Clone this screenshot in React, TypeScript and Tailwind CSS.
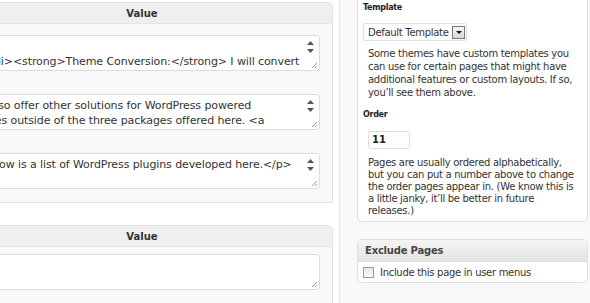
import React from "react";

interface FieldProps {
  lines: string[];
  arrows?: boolean;
}

const Grip = () => (
  <svg width="8" height="8" viewBox="0 0 8 8" className="block">
    <path d="M7 2 L2 7 M7 5 L5 7" stroke="#9a9a9a" strokeWidth="1" />
  </svg>
);

const Arrow = ({ up }: { up?: boolean }) => (
  <svg width="7" height="4" viewBox="0 0 7 4" className="block">
    <path d={up ? "M0 4 L3.5 0 L7 4 Z" : "M0 0 L7 0 L3.5 4 Z"} fill="#555" />
  </svg>
);

const Field: React.FC<FieldProps> = ({ lines, arrows = true }) => {
  return (
    <div className="ml-[14px] flex h-[36px] bg-white border border-[#dcdcdc] rounded-[3px] overflow-hidden">
      <div className="flex-1 pl-[3px] pt-[3px] text-[11px] leading-[15px] tracking-[-0.1px] text-[#333] whitespace-pre overflow-hidden">
        {lines.map((l, i) => (
          <div key={i} className="h-[15px]">
            {l}
          </div>
        ))}
      </div>
      <div className="w-[18px] flex flex-col items-center pt-[5px] pb-[1px]">
        {arrows && (
          <>
            <Arrow up />
            <div className="h-[4px]" />
            <Arrow />
          </>
        )}
        <div className="flex-1" />
        <div className="self-end pr-[1px]">
          <Grip />
        </div>
      </div>
    </div>
  );
};

const ValueHeader = () => (
  <div className="flex h-[21px] bg-[#efefef] border-b border-[#e6e6e6] rounded-tr-[5px]">
    <div className="w-[356px] flex items-center justify-center text-[10px] font-bold text-[#333]">
      Value
    </div>
  </div>
);

export default function App() {
  return (
    <div className="flex w-[590px] h-[303px] overflow-hidden bg-white font-['DejaVu_Sans',sans-serif] text-[#333]">
      {/* meta boxes, left column */}
      <div className="w-[339px] shrink-0 pt-[2px]">
        <div className="-ml-[37px] w-[370px] flex flex-col">
          <div className="border border-[#e2e2e2] rounded-tr-[5px] bg-[#f8f8f8]">
            <ValueHeader />
            <div className="w-[356px] flex flex-col gap-[23px] pt-[11px] pb-[13px]">
              <Field lines={["", "  <li><strong>Theme Conversion:</strong> I will convert"]} />
              <Field
                lines={[
                  "I also offer other solutions for WordPress powered",
                  "sites outside of the three packages offered here. <a",
                ]}
              />
              <Field lines={["Below is a list of WordPress plugins developed here.</p>"]} />
            </div>
          </div>

          <div className="mt-[22px] border border-[#e2e2e2] rounded-tr-[5px] bg-[#f8f8f8] h-[120px]">
            <ValueHeader />
            <div className="w-[356px] pt-[7px]">
              <Field lines={[""]} arrows={false} />
            </div>
          </div>
        </div>
      </div>

      {/* sidebar */}
      <div className="flex-1 bg-[#f9f9f9] border-l border-[#e3e3e3] pl-[17px] pr-[2px]">
        <div className="bg-white border border-t-0 border-[#dfdfdf] rounded-b-[5px] pl-[5px] pr-[6px] pb-[4px]">
          <div className="pt-[1px] text-[8px] leading-[14px] font-bold tracking-[-0.3px] text-[#222]">Template</div>
          <div className="mt-[8px] flex items-center w-[104px] h-[18px] bg-white border border-[#dcdcdc] rounded-[3px] pl-[4px] pr-[1px]">
            <span className="flex-1 whitespace-nowrap text-[10px] tracking-[-0.3px] text-[#333]">Default Template</span>
            <span className="w-[13px] h-[13px] flex items-center justify-center border border-[#777] bg-gradient-to-b from-[#f4f4f4] to-[#d8d8d8]">
              <svg width="6" height="3" viewBox="0 0 6 3">
                <path d="M0 0 L6 0 L3 3 Z" fill="#111" />
              </svg>
            </span>
          </div>
          <p className="mt-[6px] ml-[5px] w-[212px] text-[10px] leading-[13px] tracking-[-0.3px] text-[#333]">
            Some themes have custom templates you can use for certain pages that might have additional features or custom layouts. If so, you’ll see them above.
          </p>
          <div className="mt-[9px] text-[8px] leading-[14px] font-bold tracking-[-0.3px] text-[#222]">Order</div>
          <div className="ml-[5px] mt-[9px] w-[42px] h-[18px] bg-white border border-[#dcdcdc] rounded-[3px] pl-[3px] text-[10px] leading-[16px] font-bold text-[#222]">
            11
          </div>
          <p className="mt-[8px] ml-[5px] w-[212px] text-[10px] leading-[12px] tracking-[-0.3px] text-[#333]">
            Pages are usually ordered alphabetically, but you can put a number above to change the order pages appear in. (We know this is a little janky, it’ll be better in future releases.)
          </p>
        </div>

        <div className="mt-[17px] bg-white border border-[#dfdfdf] rounded-[5px] overflow-hidden">
          <div className="h-[22px] flex items-center pl-[7px] bg-gradient-to-b from-[#f5f5f5] to-[#e4e4e4] border-b border-[#dfdfdf] text-[10px] font-bold tracking-[-0.2px] text-[#464646]">
            Exclude Pages
          </div>
          <label className="flex items-center h-[20px] pl-[5px] gap-[6px] text-[10px] tracking-[-0.3px] text-[#333]">
            <span className="w-[11px] h-[11px] border border-[#999] bg-gradient-to-b from-[#e8e8e8] to-[#fafafa]" />
            Include this page in user menus
          </label>
        </div>
      </div>
    </div>
  );
}
